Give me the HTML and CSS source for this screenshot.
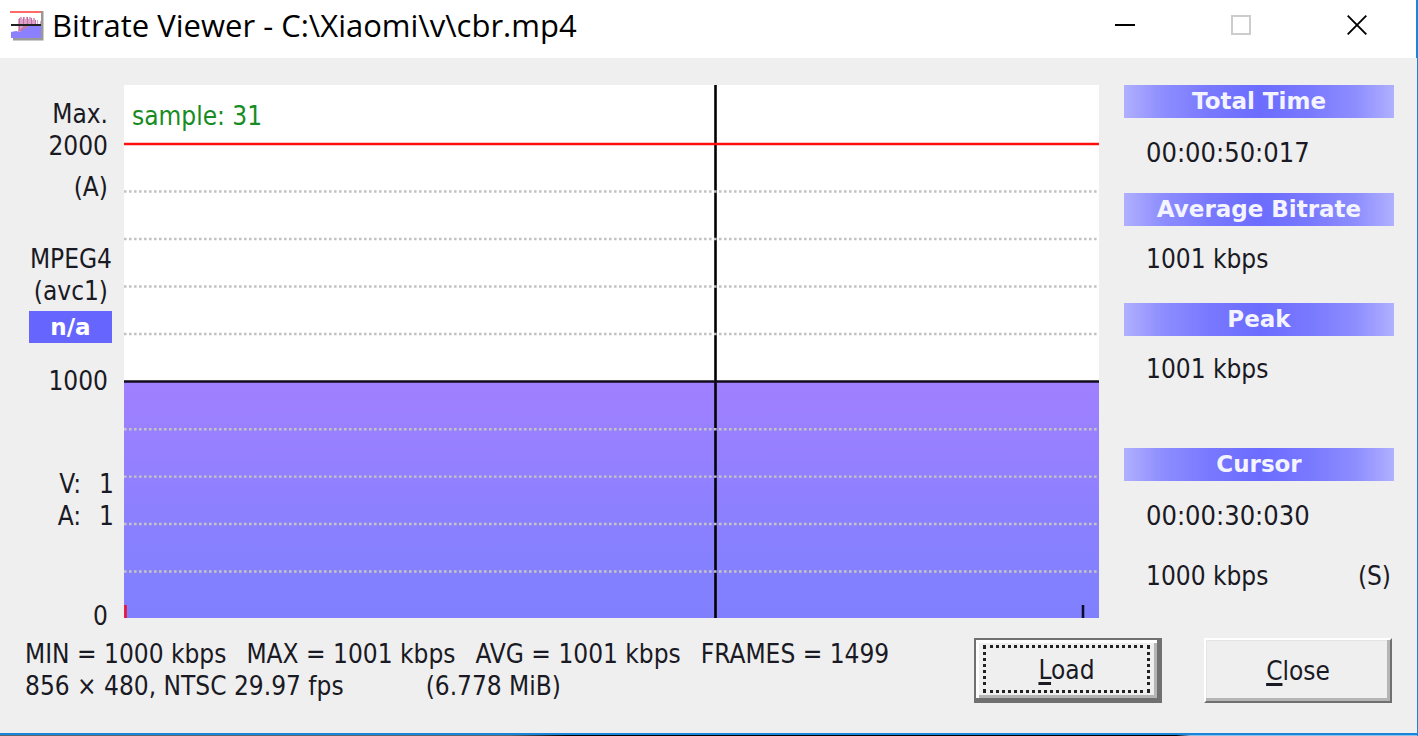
FILE: index.html
```html
<!DOCTYPE html>
<html lang="en">
<head>
<meta charset="utf-8">
<title>Bitrate Viewer</title>
<link rel="stylesheet" href="styles.css">
</head>
<body>
<div class="window">
  <header class="titlebar">
    <svg class="app-icon" viewBox="0 0 34 32" aria-hidden="true">
      <path d="M3 30h29V2" fill="none" stroke="#999" stroke-width="3"/>
      <path d="M1 2h30v27H1z" fill="#fff"/>
      <path d="M8 29V10h2V8h2v2h1V8h2v2h1V8h2v2h1V8h2v3h2V9h2v6h2v-4h1v6h2v-5h1v17z" fill="#dba3c8"/>
      <path d="M9 22V9h1v13M13 22V8h1v14M17 20V8h1v12M21 20V9h1v11M25 20v-9h1v9" fill="#c46fa6"/>
      <path d="M8 22l6-5 6-2 6 2-8 6z" fill="#c57aa8"/>
      <path d="M1 29v-6l5-1 4 1 4-3 5-3 5-1h7v13z" fill="#8c80ff"/>
      <path d="M1 16h30" stroke="#222" stroke-width="2"/>
      <path d="M0 3h31" stroke="#ff6b6b" stroke-width="2"/>
    </svg>
    <h1 class="title">Bitrate Viewer - C:\Xiaomi\v\cbr.mp4</h1>
    <div class="window-controls">
      <button class="control" aria-label="Minimize"><svg viewBox="0 0 20 20"><path d="M0 10h20" stroke="#000" stroke-width="2"/></svg></button>
      <button class="control" aria-label="Maximize" disabled><svg viewBox="0 0 20 20"><path d="M1 1h18v18H1z" fill="none" stroke="#ccc" stroke-width="2"/></svg></button>
      <button class="control" aria-label="Close window"><svg viewBox="0 0 20 20"><path d="M.7.7l18.6 18.6M19.3.7L.7 19.3" stroke="#000" stroke-width="1.9"/></svg></button>
    </div>
  </header>

  <main class="content">
    <div class="axis">
      <span>Max.</span>
      <span>2000</span>
      <span class="axis-mode">(A)</span>
      <span class="codec">MPEG4</span>
      <span>(avc1)</span>
      <span class="badge">n/a</span>
      <span class="axis-mid">1000</span>
      <div class="streams"><span>V:</span><span>1</span><span>A:</span><span>1</span></div>
      <span class="axis-zero">0</span>
    </div>

    <div class="chart">
      <svg class="plot" viewBox="0 0 975 533" preserveAspectRatio="none" role="img" aria-label="Bitrate over time">
        <defs>
          <linearGradient id="fill" x1="0" y1="0" x2="0" y2="1">
            <stop offset="0" stop-color="#a080ff"/>
            <stop offset=".8" stop-color="#8480ff"/>
            <stop offset="1" stop-color="#8080ff"/>
          </linearGradient>
        </defs>
        <rect width="975" height="533" fill="#fff"/>
        <rect y="296" width="975" height="237" fill="url(#fill)"/>
        <path d="M591.5 0v533" stroke="#000" stroke-width="2.6"/>
        <g stroke="#c3c3c3" stroke-width="2.4" stroke-dasharray="2.6 2.4">
          <path d="M0 106.5h975M0 154h975M0 201.5h975M0 249h975"/>
          <path d="M0 344.2h975M0 391.6h975M0 439h975M0 486.5h975"/>
        </g>
        <path d="M0 59h975" stroke="#ff1010" stroke-width="2.6"/>
        <path d="M0 296.5h975" stroke="#100c1c" stroke-width="2.6"/>
        <path d="M1.5 520v13" stroke="#f01030" stroke-width="2.6"/>
        <path d="M959 520v13" stroke="#100c30" stroke-width="2.6"/>
      </svg>
      <span class="sample">sample: 31</span>
    </div>

    <aside class="stats">
      <section class="stat-total">
        <h2 class="stat-title">Total Time</h2>
        <p class="stat-value stat-time">00:00:50:017</p>
      </section>
      <section>
        <h2 class="stat-title">Average Bitrate</h2>
        <p class="stat-value">1001 kbps</p>
      </section>
      <section>
        <h2 class="stat-title">Peak</h2>
        <p class="stat-value">1001 kbps</p>
      </section>
      <section class="stat-cursor">
        <h2 class="stat-title">Cursor</h2>
        <p class="stat-value stat-time">00:00:30:030</p>
        <p class="stat-value stat-rate"><span>1000 kbps</span><span>(S)</span></p>
      </section>
    </aside>
  </main>

  <footer class="footer">
    <div>
      <div class="summary-row"><span>MIN = 1000 kbps</span><span>MAX = 1001 kbps</span><span>AVG = 1001 kbps</span><span>FRAMES = 1499</span></div>
      <div class="summary-row summary-file"><span>856 × 480, NTSC 29.97 fps</span><span>(6.778 MiB)</span></div>
    </div>
    <div class="actions">
      <button class="btn btn-default"><span class="btn-label"><span><u>L</u>oad</span></span></button>
      <button class="btn"><span class="btn-label"><span><u>C</u>lose</span></span></button>
    </div>
  </footer>
  <div class="window-edge"></div>
</div>
</body>
</html>
```
FILE: styles.css
```css
* {
  box-sizing: border-box;
}

body {
  margin: 0;
  background: #efefef;
  color: #1a1a24;
  font: 26px/32px "DejaVu Sans Condensed", "Noto Sans", sans-serif;
}

h1, h2, p {
  margin: 0;
}

.window {
  display: flex;
  flex-direction: column;
  min-height: 100vh;
  background: #efefef;
  border-right: 1px solid #1a84d8;
}

.window-edge {
  height: 3px;
  margin-top: auto;
  background:
    linear-gradient(90deg, #5a6670 36%, #000 40% 83%, #8fc0e8 84%) bottom / 100% 1px no-repeat,
    #1a84d8;
}

.titlebar {
  display: flex;
  align-items: center;
  height: 58px;
  padding: 0 49px 8px 10px;
  background: #fff;
  border-right: 1px solid #1a84d8;
}

.app-icon {
  width: 34px;
  height: 32px;
}

.title {
  flex: 1;
  margin-left: 8px;
  color: #000;
  font: 400 31px/40px "Open Sans", "Noto Sans", sans-serif;
  white-space: nowrap;
}

.window-controls {
  display: flex;
  gap: 96px;
}

.control {
  width: 20px;
  height: 20px;
  padding: 0;
  background: none;
  border: 0;
}

.control svg {
  display: block;
  width: 20px;
  height: 20px;
}

.content {
  display: grid;
  grid-template-columns: 124px 1fr 270px;
  padding: 27px 23px 0 0;
}

.axis {
  display: flex;
  flex-direction: column;
  align-items: flex-end;
  padding: 13px 16px 0 0;
}

.axis-mode {
  margin-top: 9px;
}

.codec {
  margin: 40px -4px 0 0;
}

.badge {
  width: 83px;
  margin: 4px -4px 0 0;
  background: #6666ff;
  color: #fff;
  font: 700 23px/32px "DejaVu Sans", sans-serif;
  text-align: center;
}

.axis-mid {
  margin-top: 22px;
}

.streams {
  display: grid;
  grid-template-columns: auto auto;
  column-gap: 18px;
  justify-items: end;
  margin: 71px -6px 0 0;
}

.axis-zero {
  margin-top: 68px;
}

.chart {
  position: relative;
  margin: 0 25px 14px 0;
}

.plot {
  position: absolute;
  width: 100%;
  height: 100%;
}

.sample {
  position: absolute;
  top: 15px;
  left: 8px;
  color: #168c22;
}

.stats {
  display: flex;
  flex-direction: column;
  gap: 28px;
}

.stat-title {
  margin-bottom: 17px;
  background: linear-gradient(90deg, #b0b0ff, #8e8eff 14%, #7878ff 32%, #6c6cff 50%, #7878ff 68%, #8e8eff 86%, #b0b0ff);
  color: #f4f4ff;
  font: 700 23px/33px "DejaVu Sans", sans-serif;
  text-align: center;
}

.stat-value {
  padding-left: 22px;
}

.stat-time {
  padding-top: 2px;
  font-size: 27px;
}

.stat-total {
  margin-bottom: -4px;
}

.stat-cursor {
  margin-top: 35px;
}

.stat-rate {
  display: flex;
  justify-content: space-between;
  margin-top: 28px;
  padding-right: 3px;
}

.footer {
  display: flex;
  justify-content: space-between;
  padding: 6px 25px 0;
}

.summary-row {
  display: flex;
  gap: 20px;
  white-space: pre;
}

.summary-file {
  gap: 82px;
}

.actions {
  display: flex;
  gap: 42px;
}

.btn {
  width: 188px;
  height: 65px;
  padding: 5px;
  background: #efefef;
  border: 2px solid;
  border-color: #fff #707070 #707070 #fff;
  box-shadow: inset -3px -3px #b5b5b5, inset 1px 1px #e4e4e4;
  color: inherit;
  font: inherit;
}

.btn-default {
  border-width: 2px 5px 5px 2px;
  border-color: #707070;
  box-shadow: inset 3px 3px #fff, inset -3px -3px #b5b5b5;
}

.btn-label {
  display: flex;
  align-items: center;
  justify-content: center;
  height: 100%;
}

.btn-default .btn-label {
  margin: 0 2px;
  padding-top: 2px;
  border: 3px dotted #222;
}

.btn u {
  text-decoration-thickness: 3px;
  text-underline-offset: 3px;
}
```
